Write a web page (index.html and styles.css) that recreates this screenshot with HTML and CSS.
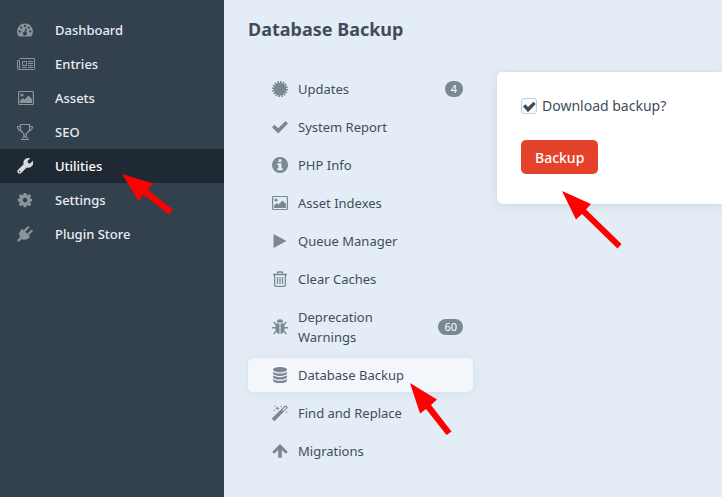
FILE: index.html
```
<!DOCTYPE html>
<html lang="en">
<head>
<meta charset="utf-8">
<meta name="viewport" content="width=device-width, initial-scale=1">
<title>Database Backup</title>
<link rel="stylesheet" href="styles.css">
</head>
<body>
<svg class="defs" aria-hidden="true">
  <symbol id="image" viewBox="0 0 16 16"><path fill="none" stroke="currentColor" stroke-width="1.2" d="M1.2 1.5H14.8Q15.4 1.5 15.4 2.2V13.8Q15.4 14.5 14.8 14.5H1.2Q.6 14.5.6 13.8V2.2Q.6 1.5 1.2 1.5Z"/><circle cx="4" cy="5" r="1.6"/><path d="M2 13V10.500L5 8L6.500 9.500L10.500 5.500L14 9V13Z"/></symbol>
</svg>
<div class="app">
  <nav class="sidebar" aria-label="Primary">
    <a href="#"><svg viewBox="0 0 16 16"><path fill-rule="evenodd" d="M8 1.500A8 8 0 0 1 14.500 14Q14.200 14.500 13.500 14.500H2.500Q1.800 14.500 1.500 14A8 8 0 0 1 8 1.500ZM8 2.800a1.100 1.100 0 1 0 .01 0ZM4.200 4.400a1.100 1.100 0 1 0 .01 0ZM11.800 4.400a1.100 1.100 0 1 0 .01 0ZM2.700 8.300a1.100 1.100 0 1 0 .01 0ZM13.300 8.300a1.100 1.100 0 1 0 .01 0ZM8.800 6L7.500 9.700A1.900 1.900 0 1 0 9 10L9.900 6.300Z"/></svg><span>Dashboard</span></a>
    <a href="#"><svg class="wide" viewBox="0 0 18 16"><g fill="none" stroke="currentColor"><path d="M2.500 2.500H17.500V13Q17.500 13.500 17 13.500H1.500Q.5 13.500.5 12.500V4.500H2.500V12.500Q2.500 13.500 1.500 13.500"/><path d="M5.500 5.500H9.500V9.500H5.500ZM11 5.500H16M11 7.500H16M11 9.500H16M5 11.500H10M11 11.500H16"/></g></svg><span>Entries</span></a>
    <a href="#"><svg class="wide" viewBox="0 0 16 16"><use href="#image"/></svg><span>Assets</span></a>
    <a href="#"><svg viewBox="0 0 16 16"><g fill="none" stroke="currentColor" stroke-width="1.2"><path d="M3.500.5H12.500V4Q12.500 8 9.200 9.500V12H6.800V9.500Q3.500 8 3.500 4ZM3.500 2.500H.5Q.5 6.500 5.500 7.500M12.500 2.500H15.500Q15.500 6.500 10.500 7.500M4 15.500H12M5.500 14.500Q5.500 13 8 13T10.500 14.500"/></g></svg><span>SEO</span></a>
    <a href="#" class="active" aria-current="page"><svg viewBox="0 0 16 16"><path fill-rule="evenodd" d="M15.800 2.700A4.900 4.900 0 0 1 9.700 9.400L4.300 14.900Q2.500 16.500 1 15T1.100 11.700L6.600 6.300A4.900 4.900 0 0 1 13.200.4L10.600 2.800L10.900 5.100L13.200 5.400ZM2.600 12.700a.7.7 0 1 0 .01 0Z"/></svg><span>Utilities</span></a>
    <a href="#"><svg viewBox="0 0 16 16"><path fill-rule="evenodd" d="M6.600 1H9.400L9.800 2.900L10.700 3.300L12.400 2.100L14.200 3.900L13 5.500L13.400 6.500L15.200 6.800V9.400L13.400 9.700L13 10.700L14.200 12.400L12.400 14.200L10.700 13L9.800 13.400L9.400 15.200H6.600L6.200 13.400L5.300 13L3.600 14.200L1.800 12.400L3 10.700L2.600 9.700L.8 9.400V6.800L2.600 6.500L3 5.500L1.800 3.900L3.600 2.100L5.300 3.300L6.200 2.900ZM8 5.800a2.300 2.300 0 1 0 .01 0Z"/></svg><span>Settings</span></a>
    <a href="#"><svg viewBox="0 0 16 16"><path d="M5.200 2.800L13.200 10.800Q9.500 15.500 4.800 13L1.700 16L0 14.300L3 11.200Q.5 6.500 5.200 2.800Z"/><path fill="none" stroke="currentColor" stroke-width="2.200" stroke-linecap="round" d="M7.500 5L11.200 1.300M11 8.500L14.700 4.800"/></svg><span>Plugin Store</span></a>
  </nav>
  <main>
    <h1>Database Backup</h1>
    <div class="columns">
      <nav class="tools" aria-label="Utilities">
        <a href="#"><svg viewBox="0 0 16 16"><circle cx="8" cy="8" r="6.300"/><circle cx="8" cy="8" r="7" fill="none" stroke="currentColor" stroke-width="2" pathLength="32" stroke-dasharray="1.200 .8"/></svg><span>Updates</span><b class="badge">4</b></a>
        <a href="#"><svg viewBox="0 0 16 16"><path d="M0 8.200L2.500 5.700L6.200 9.200L13.500 1.900L16 4.400L6.200 14.400Z"/></svg><span>System Report</span></a>
        <a href="#"><svg viewBox="0 0 16 16"><path fill-rule="evenodd" d="M8 0a8 8 0 1 0 .01 0ZM6.500 2.200H9.500V5H6.500ZM5.300 6.200H9.500V11.200H10.700V13.200H5.300V11.200H6.500V8.200H5.300Z"/></svg><span>PHP Info</span></a>
        <a href="#"><svg viewBox="0 0 16 16"><use href="#image"/></svg><span>Asset Indexes</span></a>
        <a href="#"><svg viewBox="0 0 16 16"><path d="M1.500 1L14.500 8L1.500 15Z"/></svg><span>Queue Manager</span></a>
        <a href="#"><svg viewBox="0 0 16 16"><g fill="none" stroke="currentColor"><path stroke-width="1.300" d="M1 3.500H15M5 3.500L5.800 1H10.200L11 3.500M2.600 3.500V13.500Q2.600 15.400 4.200 15.400H11.800Q13.400 15.400 13.400 13.500V3.500"/><path stroke-width="1.200" d="M5.500 6V13M8 6V13M10.500 6V13"/></g></svg><span>Clear Caches</span></a>
        <a href="#"><svg viewBox="0 0 16 16"><path d="M4.800 3.500A3.200 3.200 0 0 1 11.200 3.500ZM3.500 4.400H7.500V15Q3.500 14.200 3.500 10ZM8.500 4.400H12.500V10Q12.500 14.200 8.500 15Z"/><path fill="none" stroke="currentColor" stroke-width="1.400" d="M1.500 3L4.300 5.500M14.500 3L11.700 5.500M0 8.800H4M16 8.800H12M1.500 15L4.500 12M14.500 15L11.500 12"/></svg><span>Deprecation Warnings</span><b class="badge">60</b></a>
        <a href="#" class="active" aria-current="page"><svg viewBox="0 0 16 16"><ellipse cx="8" cy="2.700" rx="7" ry="2.700"/><path d="M1 4.700Q3 6.500 8 6.500T15 4.700V6.300Q14 8.900 8 8.900T1 6.300ZM1 8.300Q3 10.100 8 10.100T15 8.300V9.900Q14 12.500 8 12.500T1 9.900ZM1 11.900Q3 13.700 8 13.700T15 11.900V13.400Q14 16 8 16T1 13.400Z"/></svg><span>Database Backup</span></a>
        <a href="#"><svg viewBox="0 0 16 16"><path fill-rule="evenodd" d="M.1 13.300L12.900.5Q13.500 0 14.100.5L15.500 1.900Q16 2.500 15.500 3.100L2.700 15.900Q2.300 16.200 1.900 15.900L.1 14.100Q-.2 13.700.1 13.300ZM10.200 5L11.200 6L14.500 2.600L13.500 1.600Z"/><path d="M5.500 1L6.100 2.700L7.700 3.300L6.100 3.900L5.500 5.500L4.900 3.900L3.200 3.300L4.900 2.700ZM2.500.7h1.200v1.200H2.500ZM8.500.7h1.200v1.200H8.500ZM1.700 4.700h1.200v1.200H1.700ZM13.900 6.500h1.200v1.200h-1.200Z"/></svg><span>Find and Replace</span></a>
        <a href="#"><svg viewBox="0 0 16 16"><path d="M8 1L15.700 8.700L13.700 10.700L9.800 7V14.700H6.200V7L2.300 10.700L.3 8.700Z"/></svg><span>Migrations</span></a>
      </nav>
      <form class="card">
        <label class="check"><input type="checkbox" checked><span>Download backup?</span></label>
        <button type="button">Backup</button>
      </form>
    </div>
  </main>
</div>
<svg class="arrows" width="722" height="497" viewBox="0 0 722 497" aria-hidden="true">
  <path d="M122 174L153 183.500L147.500 190L173 209.500L169 214.500L143.500 194.500L138.500 201Z"/>
  <path d="M410 383L437 399.500L431 405L451.500 431.500L446.500 435L426 409L420 413.500Z"/>
  <path d="M562 191L591 204L586 209.500L621.500 244L617.500 248.500L582 214L576 219.500Z"/>
</svg>
</body>
</html>
```
FILE: styles.css
```
* { box-sizing: border-box; }

body {
  margin: 0;
  overflow-x: hidden;
  background: #e4edf6;
  color: #3f4d5a;
  font: 13px/20px "Noto Sans", sans-serif;
}

a { color: inherit; text-decoration: none; }

svg { fill: currentColor; }

.defs { position: absolute; width: 0; height: 0; }

.app { display: flex; min-height: 100vh; }

.sidebar {
  flex: 0 0 224px;
  padding-top: 13px;
  background: #33404d;
  color: #e8eef5;
  font-weight: 500;
}

.sidebar a {
  display: grid;
  grid-template-columns: 38px 1fr;
  align-items: center;
  padding: 7px 17px;
}

.sidebar svg { width: 16px; height: 16px; color: #8b939b; }
.sidebar .wide { width: 18px; }
.sidebar .active { background: #1f2933; color: #fff; }
.sidebar .active svg { color: #d8dbde; }

main { flex: 1; min-width: 0; padding: 16px 0 0 24px; }

h1 { margin: 0 0 30px; font-size: 18px; line-height: 26px; font-weight: 700; }

.columns { display: flex; align-items: flex-start; gap: 24px; }

.tools {
  flex: 0 0 225px;
  display: flex;
  flex-direction: column;
  gap: 4px;
}

.tools a {
  display: flex;
  align-items: center;
  gap: 10px;
  padding: 7px 10px 7px 24px;
  border-radius: 5px;
}

.tools a span { flex: 1; }
.tools svg { flex: none; width: 16px; height: 16px; color: #7b8793; }

.tools .active {
  background: #f3f7fc;
  box-shadow: 0 0 0 1px #cdd8e440, 0 2px 12px #cdd8e480;
}

.badge {
  padding: 0 6px;
  border-radius: 8px;
  background: #7b8793;
  color: #fff;
  font-size: 11px;
  line-height: 16px;
  font-weight: 400;
}

.card {
  flex: 1;
  display: flex;
  flex-direction: column;
  align-items: flex-start;
  gap: 24px;
  padding: 24px 24px 30px;
  border-radius: 5px 0 0 5px;
  background: #fff;
  box-shadow: 0 0 0 1px #cdd8e440, 0 2px 12px #cdd8e4;
  font-size: 14px;
}

.check { display: flex; align-items: center; gap: 5px; }

.check input {
  appearance: none;
  width: 16px;
  height: 16px;
  margin: 0;
  border: 1px solid #c3cfdc;
  border-radius: 3px;
  background: #fbfcfe;
}

.check input:checked::before {
  content: "";
  display: block;
  height: 14px;
  background: #3f4d5a;
  clip-path: polygon(7% 54%, 24% 38%, 43% 58%, 82% 20%, 98% 36%, 43% 94%);
}

button {
  height: 34px;
  padding: 2px 14px 0;
  border: 0;
  border-radius: 5px;
  background: #e5422b;
  color: #fff;
  font: 500 14px/20px "Noto Sans", sans-serif;
}

.arrows { position: absolute; top: 0; left: 0; color: #f00; pointer-events: none; }
```
